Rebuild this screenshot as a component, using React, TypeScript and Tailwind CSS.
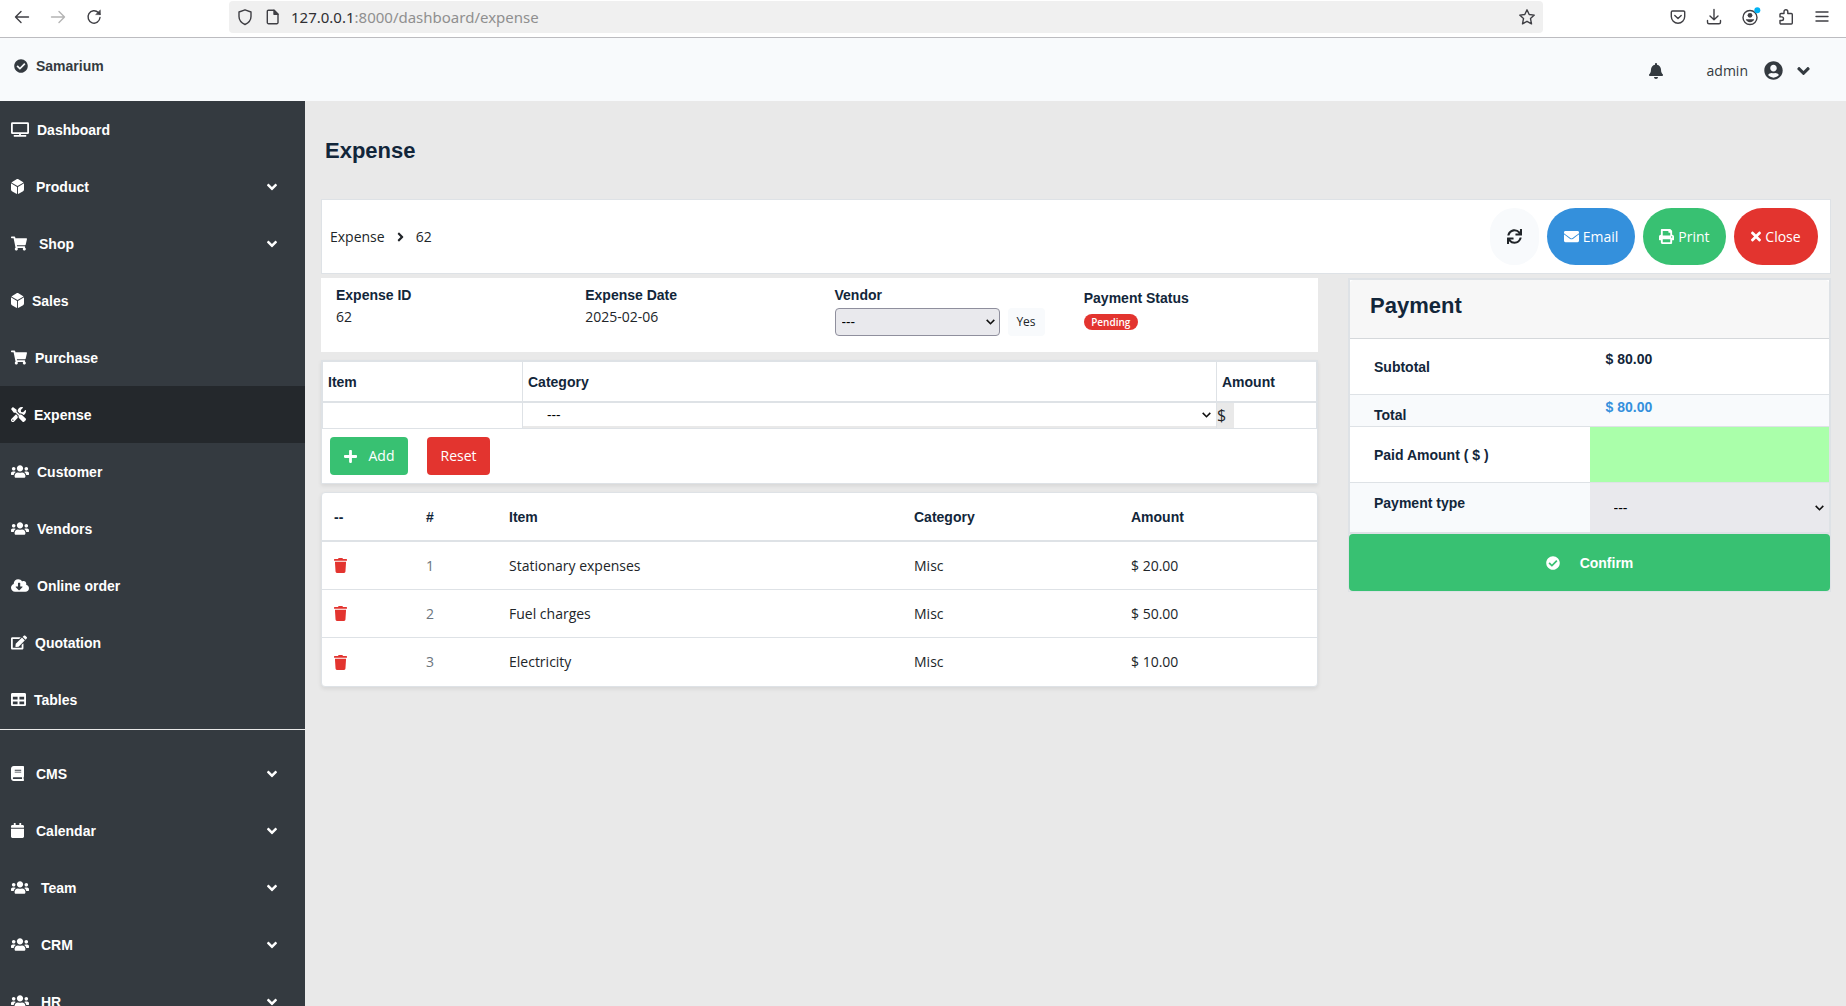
import { useState } from 'react';
import type { ReactNode } from 'react';
import type { IconType } from 'react-icons';
import {
  FaAngleDown,
  FaAngleRight,
  FaBell,
  FaBook,
  FaCalendar,
  FaCheckCircle,
  FaCloudDownloadAlt,
  FaDiceD6,
  FaEdit,
  FaEnvelope,
  FaPlus,
  FaPrint,
  FaShoppingCart,
  FaSync,
  FaTable,
  FaTimes,
  FaTools,
  FaTrash,
  FaTv,
  FaUserCircle,
  FaUsers,
} from 'react-icons/fa';

type MenuItem = { label: string; icon: IconType; width: string; dropdown?: boolean; active?: boolean };

const mainMenu: MenuItem[] = [
  { label: 'Dashboard', icon: FaTv, width: 'w-[18px]' },
  { label: 'Product', icon: FaDiceD6, width: 'w-[13px]', dropdown: true },
  { label: 'Shop', icon: FaShoppingCart, width: 'w-4', dropdown: true },
  { label: 'Sales', icon: FaDiceD6, width: 'w-[13px]' },
  { label: 'Purchase', icon: FaShoppingCart, width: 'w-4' },
  { label: 'Expense', icon: FaTools, width: 'w-[15px]', active: true },
  { label: 'Customer', icon: FaUsers, width: 'w-[18px]' },
  { label: 'Vendors', icon: FaUsers, width: 'w-[18px]' },
  { label: 'Online order', icon: FaCloudDownloadAlt, width: 'w-[18px]' },
  { label: 'Quotation', icon: FaEdit, width: 'w-4' },
  { label: 'Tables', icon: FaTable, width: 'w-[15px]' },
];

const moduleMenu: MenuItem[] = [
  { label: 'CMS', icon: FaBook, width: 'w-[13px]', dropdown: true },
  { label: 'Calendar', icon: FaCalendar, width: 'w-[13px]', dropdown: true },
  { label: 'Team', icon: FaUsers, width: 'w-[18px]', dropdown: true },
  { label: 'CRM', icon: FaUsers, width: 'w-[18px]', dropdown: true },
  { label: 'HR', icon: FaUsers, width: 'w-[18px]', dropdown: true },
];

const expenseItems = [
  { id: 1, item: 'Stationary expenses', category: 'Misc', amount: '20.00' },
  { id: 2, item: 'Fuel charges', category: 'Misc', amount: '50.00' },
  { id: 3, item: 'Electricity', category: 'Misc', amount: '10.00' },
];

function BarIcon({ label, dim, children }: { label: string; dim?: boolean; children: ReactNode }) {
  return (
    <button type="button" aria-label={label} className={dim ? 'text-[#b4b4b4]' : 'text-[#3f3f44]'}>
      <svg
        className="block size-4 overflow-visible"
        viewBox="0 0 16 16"
        fill="none"
        stroke="currentColor"
        strokeWidth="1.4"
        strokeLinecap="round"
        strokeLinejoin="round"
      >
        {children}
      </svg>
    </button>
  );
}

function BrowserBar() {
  return (
    <div className="flex h-[38px] shrink-0 items-start border-b border-[#bcbcc0] bg-white pt-px">
      <div className="flex h-8 w-[229px] shrink-0 items-center gap-5 pl-[14px]">
        <BarIcon label="Back">
          <path d="M14.5 8H1.5M7 2.5 1.5 8 7 13.5" />
        </BarIcon>
        <BarIcon label="Forward" dim>
          <path d="M1.5 8h13M9 2.5 14.5 8 9 13.5" />
        </BarIcon>
        <BarIcon label="Reload">
          <path d="M14 8.5A6 6.2 0 1 1 12.3 3.6L14 5.2" />
          <path d="M14.3 1.3v4.3H10z" fill="currentColor" strokeWidth="0.6" />
        </BarIcon>
      </div>
      <div className="flex h-8 min-w-0 flex-1 items-center rounded bg-[#f0f0f0] px-2">
        <div className="flex gap-3">
          <BarIcon label="Site protection">
            <path d="M8 .8 14 3v4.5c0 3.5-2.300 6.300-6 8C4.300 13.800 2 11 2 7.500V3z" />
          </BarIcon>
          <BarIcon label="Site information">
            <path d="M3.500 1.200h5.500L13 5.200v8.300a1.200 1.200 0 0 1-1.200 1.200H3.500a1.200 1.200 0 0 1-1.200-1.200v-11A1.200 1.200 0 0 1 3.500 1.200z" />
            <path d="M9 1.200v4H13z" fill="currentColor" />
          </BarIcon>
        </div>
        <p className="flex-1 truncate pl-[10px] font-['Noto_Sans',sans-serif] text-[15px] leading-6 text-[#8f8f8f]">
          <span className="text-[#2f2f33]">127.0.0.1</span>:8000/dashboard/expense
        </p>
        <BarIcon label="Bookmark this page">
          <path d="m8 .8 2.200 4.700 5.100.6-3.800 3.500 1 5.200L8 12.300l-4.500 2.500 1-5.200L.7 6.100l5.100-.6z" />
        </BarIcon>
      </div>
      <div className="flex h-8 w-[303px] shrink-0 items-center justify-end gap-5 pr-4">
        <BarIcon label="Save to Pocket">
          <path d="M2.500 2h11a1.200 1.200 0 0 1 1.200 1.200V7.500a6.700 6.700 0 0 1-13.400 0V3.200A1.200 1.200 0 0 1 2.500 2z" />
          <path d="M4.800 6.500 8 9.500l3.200-3" />
        </BarIcon>
        <BarIcon label="Downloads">
          <path d="M8 .5v10M4 7l4 3.700L12 7M1.500 11.500v1.800a1.500 1.500 0 0 0 1.500 1.500h10a1.500 1.500 0 0 0 1.500-1.500v-1.800" />
        </BarIcon>
        <BarIcon label="Account">
          <circle cx="8" cy="8.500" r="7" />
          <circle cx="8" cy="6.300" r="2.400" fill="currentColor" stroke="none" />
          <path d="M3.800 10.300h8.400c-.5 1.700-2 2.900-4.200 2.900s-3.700-1.200-4.200-2.900z" fill="currentColor" stroke="none" />
          <circle cx="15.300" cy="1.300" r="3" fill="#00b3f4" stroke="none" />
        </BarIcon>
        <BarIcon label="Extensions">
          <path d="M6 4.500V2.700a1.900 1.900 0 0 1 3.800 0v1.800h3.500a1 1 0 0 1 1 1V14a1 1 0 0 1-1 1H3a1 1 0 0 1-1-1v-2.500h1.700a1.800 1.800 0 0 0 0-3.600H2V5.500a1 1 0 0 1 1-1z" />
        </BarIcon>
        <BarIcon label="Application menu">
          <path d="M2 3h12M2 7.500h12M2 12h12" />
        </BarIcon>
      </div>
    </div>
  );
}

function TopNav() {
  return (
    <header className="flex h-[63px] shrink-0 items-start justify-between bg-[#f8fafc] text-[#343a40]">
      <a href="#" className="mt-[18px] flex items-center gap-2 pl-[14px] font-['Liberation_Sans',sans-serif] text-sm font-bold">
        <FaCheckCircle className="size-[14px]" />
        Samarium
      </a>
      <div className="flex h-full items-center pt-[2px] pr-9">
        <button type="button" aria-label="Notifications" className="mr-11">
          <FaBell className="h-4 w-[14px]" />
        </button>
        <button type="button" className="flex items-center text-sm">
          <span>admin</span>
          <FaUserCircle className="ml-4 size-[19px]" />
          <FaAngleDown className="ml-[14px] h-5 w-[13px]" />
        </button>
      </div>
    </header>
  );
}

function MenuLink({ item }: { item: MenuItem }) {
  const Icon = item.icon;
  return (
    <a
      href="#"
      className={`flex h-[57px] shrink-0 items-center pr-7 pl-[11px] ${item.active ? 'bg-[#24282c]' : ''}`}
    >
      <Icon className={`h-[15px] ${item.width}`} />
      <span className={item.dropdown ? 'ml-3 flex-1' : 'ml-2 flex-1'}>{item.label}</span>
      {item.dropdown && <FaAngleDown className="h-4 w-[10px]" />}
    </a>
  );
}

function Sidebar() {
  return (
    <nav className="flex w-[305px] shrink-0 flex-col overflow-hidden bg-[#343a40] font-['Liberation_Sans',sans-serif] text-sm font-bold text-white">
      {mainMenu.map((item) => (
        <MenuLink key={item.label} item={item} />
      ))}
      <hr className="mt-px mb-[15px] shrink-0 border-[#e9e9e9]" />
      {moduleMenu.map((item) => (
        <MenuLink key={item.label} item={item} />
      ))}
    </nav>
  );
}

function SelectArrow() {
  return (
    <svg
      className="pointer-events-none absolute top-1/2 right-[5px] h-[6px] w-[9px] -translate-y-1/2"
      viewBox="0 0 9 6"
      fill="none"
      stroke="#111"
      strokeWidth="1.6"
    >
      <path d="M.7.9 4.500 4.700 8.300.9" />
    </svg>
  );
}

function Toolbar() {
  return (
    <div className="flex items-center justify-between border border-[#dee2e6] bg-white py-2 pr-3 pl-2">
      <div className="flex items-center text-sm">
        <a href="#">Expense</a>
        <FaAngleRight className="mx-3 h-[14px] w-[7px]" />
        <span>62</span>
      </div>
      <div className="flex gap-2 text-sm text-white">
        <button type="button" aria-label="Refresh" className="flex h-[57px] w-[49px] items-center justify-center rounded-full bg-[#f8fafc] text-[#212529]">
          <FaSync className="size-[15px]" />
        </button>
        <button type="button" className="flex h-[57px] w-[88px] items-center justify-center gap-1 rounded-full bg-[#3490dc]">
          <FaEnvelope className="size-[15px]" />
          Email
        </button>
        <button type="button" className="flex h-[57px] w-[83px] items-center justify-center gap-1 rounded-full bg-[#38c172]">
          <FaPrint className="size-[15px]" />
          Print
        </button>
        <button type="button" className="flex h-[57px] w-[84px] items-center justify-center gap-1 rounded-full bg-[#e3342f]">
          <FaTimes className="h-[15px] w-[10px]" />
          Close
        </button>
      </div>
    </div>
  );
}

const heading = "font-['Liberation_Sans',sans-serif] font-bold text-[#12263a]";

function ExpenseInfo() {
  return (
    <section className="grid h-[74px] grid-cols-4 bg-white text-sm">
      <div className="px-[15px] pt-[7px]">
        <h2 className={heading}>Expense ID</h2>
        <p className="leading-6">62</p>
      </div>
      <div className="px-[15px] pt-[7px]">
        <h2 className={heading}>Expense Date</h2>
        <p className="leading-6">2025-02-06</p>
      </div>
      <div className="px-[15px] pt-[7px]">
        <label htmlFor="vendor" className={`block ${heading}`}>Vendor</label>
        <div className="mt-[3px] flex gap-2">
          <div className="relative w-[165px]">
            <select id="vendor" className="h-7 w-full appearance-none rounded border border-[#8f8f9d] bg-[#e9e9ed] px-[6px] text-black">
              <option>---</option>
            </select>
            <SelectArrow />
          </div>
          <button type="button" className="h-7 w-[37px] rounded-sm bg-[#f8fafc] text-xs">Yes</button>
        </div>
      </div>
      <div className="px-[15px] pt-[10px]">
        <h2 className={heading}>Payment Status</h2>
        <span className="mt-[6px] flex h-4 w-[54px] items-center justify-center rounded-full bg-[#e3342f] text-[10px] font-semibold text-white">
          Pending
        </span>
      </div>
    </section>
  );
}

function AddItemForm() {
  const [item, setItem] = useState('');
  const [amount, setAmount] = useState('');

  const reset = () => {
    setItem('');
    setAmount('');
  };

  return (
    <form
      className="mt-2 border-x border-b border-[#dee2e6] bg-white text-sm shadow-[0_2px_4px_rgba(0,0,0,0.08)]"
      onSubmit={(e) => e.preventDefault()}
    >
      <table className="w-full table-fixed border-separate border-spacing-0 border-r border-[#dee2e6]">
        <thead>
          <tr className={`text-left ${heading}`}>
            <th className="h-[43px] w-[201px] border-y-2 border-r border-l border-[#dee2e6] pr-0 pl-[5px]">Item</th>
            <th className="border-y-2 border-r border-[#dee2e6] pl-[5px]">Category</th>
            <th className="w-[99px] border-y-2 border-[#dee2e6] pl-[5px]">Amount</th>
          </tr>
        </thead>
        <tbody>
          <tr>
            <td className="h-[26px] border-r border-b border-l border-[#dee2e6] p-0">
              <input
                aria-label="Item"
                className="block h-[25px] w-full px-1 outline-none"
                value={item}
                onChange={(e) => setItem(e.target.value)}
              />
            </td>
            <td className="border-r border-b border-[#dee2e6] bg-[#e9e9e9] p-0 align-top">
              <div className="relative">
                <select aria-label="Category" className="block h-[23px] w-full appearance-none bg-white px-6 text-black">
                  <option>---</option>
                </select>
                <SelectArrow />
              </div>
            </td>
            <td className="border-b border-[#dee2e6] p-0">
              <div className="flex h-[25px] bg-[#e9e9e9]">
                <span className="w-[17px] text-base leading-6">$</span>
                <input
                  aria-label="Amount"
                  className="min-w-0 flex-1 bg-white px-1 outline-none"
                  value={amount}
                  onChange={(e) => setAmount(e.target.value)}
                />
              </div>
            </td>
          </tr>
        </tbody>
      </table>
      <div className="flex gap-[19px] p-2 text-white">
        <button type="submit" className="flex h-[38px] w-[78px] items-center justify-center gap-3 rounded bg-[#38c172]">
          <FaPlus className="h-[15px] w-[13px]" />
          Add
        </button>
        <button type="button" onClick={reset} className="h-[38px] w-[63px] rounded bg-[#e3342f]">
          Reset
        </button>
      </div>
    </form>
  );
}

function ItemList() {
  return (
    <div className="mt-2 overflow-hidden rounded border border-[#dee2e6] bg-white text-sm shadow-[0_2px_4px_rgba(0,0,0,0.08)]">
      <table className="w-full table-fixed border-separate border-spacing-0 text-left">
        <thead>
          <tr className={heading}>
            <th className="h-[49px] w-[92px] border-b-2 border-[#dee2e6] px-3">--</th>
            <th className="w-[83px] border-b-2 border-[#dee2e6] px-3">#</th>
            <th className="border-b-2 border-[#dee2e6] px-3">Item</th>
            <th className="w-[217px] border-b-2 border-[#dee2e6] px-3">Category</th>
            <th className="w-[198px] border-b-2 border-[#dee2e6] px-3">Amount</th>
          </tr>
        </thead>
        <tbody className="font-medium [&_tr:not(:last-child)_td]:border-b [&_tr:not(:last-child)_td]:border-[#dee2e6]">
          {expenseItems.map((row) => (
            <tr key={row.id}>
              <td className="h-12 px-3">
                <button type="button" aria-label={`Delete ${row.item}`} className="block text-[#e3342f]">
                  <FaTrash className="h-[15px] w-[13px]" />
                </button>
              </td>
              <td className="px-3 font-normal text-[#6c757d]">{row.id}</td>
              <td className="px-3">{row.item}</td>
              <td className="px-3">{row.category}</td>
              <td className="px-3">$ {row.amount}</td>
            </tr>
          ))}
        </tbody>
      </table>
    </div>
  );
}

function PaymentPanel() {
  const [paid, setPaid] = useState('');

  return (
    <section className={`self-start border border-[#dee2e6] text-sm ${heading}`}>
      <div className="border border-b-2 border-[#dee2e6] bg-white">
        <h2 className="h-[59px] rounded-t border-b border-[#d5d8db] bg-[#f7f7f7] px-5 pt-3 text-[22px] leading-7">Payment</h2>
        <div className="grid h-14 grid-cols-2 border-b border-[#dee2e6]">
          <span className="pt-[18px] pl-6">Subtotal</span>
          <span className="pt-[10px] pl-4">$ 80.00</span>
        </div>
        <div className="grid h-8 grid-cols-2 border-b border-[#dee2e6] bg-[#f8fafc]">
          <span className="pt-[10px] pl-6">Total</span>
          <span className="pt-[2px] pl-4 text-[#3490dc]">$ 80.00</span>
        </div>
        <div className="grid h-14 grid-cols-2 border-b border-[#dee2e6]">
          <label htmlFor="paid" className="pt-[18px] pl-6">Paid Amount ( $ )</label>
          <input
            id="paid"
            className="h-full w-full bg-[#aaffaa] px-4 outline-none"
            value={paid}
            onChange={(e) => setPaid(e.target.value)}
          />
        </div>
        <div className="grid h-[49px] grid-cols-2 bg-[#f8fafc]">
          <label htmlFor="payment-type" className="pt-[10px] pl-6">Payment type</label>
          <div className="relative">
            <select id="payment-type" className="h-full w-full appearance-none bg-[#e9e9ed] px-6 font-normal text-black">
              <option>---</option>
            </select>
            <SelectArrow />
          </div>
        </div>
      </div>
      <button type="button" className="flex h-[57px] w-full items-center justify-center gap-5 rounded bg-[#38c172] text-white">
        <FaCheckCircle className="size-[14px]" />
        Confirm
      </button>
    </section>
  );
}

export default function App() {
  return (
    <div className="flex h-screen flex-col overflow-hidden bg-[#e9e9e9] font-['Open_Sans',sans-serif] text-[#212529]">
      <BrowserBar />
      <TopNav />
      <div className="flex min-h-0 flex-1">
        <Sidebar />
        <main className="min-w-0 flex-1 pt-9 pr-[15px] pl-4">
          <h1 className={`mb-[34px] pl-1 text-[22px] leading-7 ${heading}`}>Expense</h1>
          <Toolbar />
          <div className="mt-1 grid grid-cols-[minmax(0,1fr)_483px] gap-[30px]">
            <div>
              <ExpenseInfo />
              <AddItemForm />
              <ItemList />
            </div>
            <PaymentPanel />
          </div>
        </main>
      </div>
    </div>
  );
}
